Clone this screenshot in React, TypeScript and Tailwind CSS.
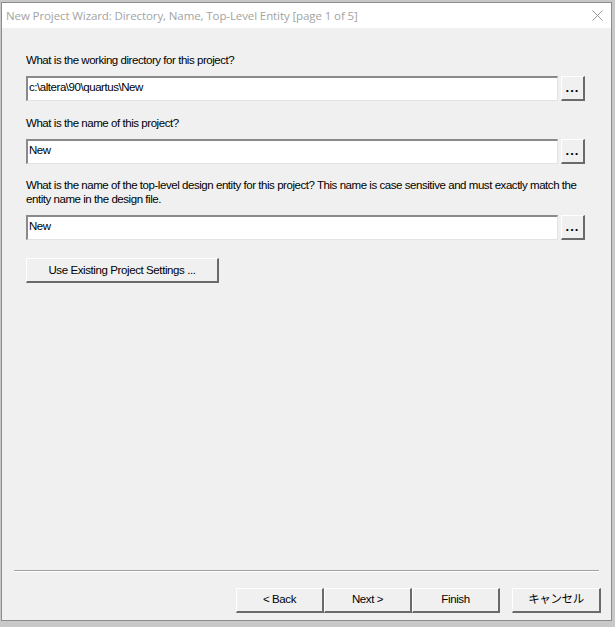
const font = { fontFamily: '"Liberation Sans", Arial, "Noto Sans CJK JP", sans-serif' };

function Field({ value }: { value: string }) {
  return (
    <div className="flex gap-[3px] h-[25px]">
      <div className="flex-1 bg-white border-t-2 border-l-2 border-t-[#8a8a8a] border-l-[#8a8a8a] border-b border-r border-b-[#e3e3e3] border-r-[#e3e3e3] pl-[1px] pt-[2px] text-[11.5px] leading-[14px] text-black tracking-[-0.45px]">
        {value}
      </div>
      <button className="w-[24px] h-[25px] bg-[#f0f0f0] border-t border-l border-t-white border-l-white border-b-2 border-r-2 border-b-[#6a6a6a] border-r-[#6a6a6a] flex items-end justify-center pb-[5px] text-[13px] font-bold leading-none text-black tracking-[1px]">
        ...
      </button>
    </div>
  );
}

function Btn({ label, className = "" }: { label: string; className?: string }) {
  return (
    <button
      className={`h-[25px] bg-[#f0f0f0] border-t border-l border-t-white border-l-white border-b-2 border-r-2 border-b-[#6a6a6a] border-r-[#6a6a6a] text-[11.5px] text-black tracking-[-0.4px] ${className}`}
    >
      {label}
    </button>
  );
}

export default function App() {
  return (
    <div className="w-[615px] h-[627px] bg-[#c8c8c8] pt-[2px] pl-[1px] pr-[3px] pb-[6px]" style={font}>
      <div className="w-full h-full flex flex-col border border-[#8c8c8c] bg-[#f0f0f0]">
        {/* title bar */}
        <div className="h-[25px] bg-white flex items-center justify-between pl-[4px] pr-[8px] shrink-0">
          <span className="text-[11.5px] text-[#a3a3a3] tracking-[-0.1px]" style={{ fontFamily: '"Open Sans", "Liberation Sans", sans-serif' }}>
            New Project Wizard: Directory, Name, Top-Level Entity [page 1 of 5]
          </span>
          <svg width="11" height="11" viewBox="0 0 11 11">
            <path d="M0.5 0.5 L10.5 10.5 M10.5 0.5 L0.5 10.5" stroke="#9a9a9a" strokeWidth="1" />
          </svg>
        </div>

        {/* body */}
        <div className="flex-1 flex flex-col pl-[24px] pr-[26px] pt-[25px] text-[11.5px] leading-[14px] text-black tracking-[-0.45px]">
          <p>What is the working directory for this project?</p>
          <div className="mt-[9px]">
            <Field value="c:\altera\90\quartus\New" />
          </div>

          <p className="mt-[15px]">What is the name of this project?</p>
          <div className="mt-[9px]">
            <Field value="New" />
          </div>

          <p className="mt-[14px]">
            What is the name of the top-level design entity for this project? This name is case sensitive and must exactly match the entity name in the design file.
          </p>
          <div className="mt-[9px]">
            <Field value="New" />
          </div>

          <div className="mt-[18px]">
            <Btn label="Use Existing Project Settings ..." className="w-[193px]" />
          </div>
        </div>

        {/* footer */}
        <div className="shrink-0 px-[12px]">
          <div className="h-[2px] border-t border-t-[#a0a0a0] border-b border-b-white" />
        </div>
        <div className="shrink-0 flex justify-end pr-[10px] pt-[16px] pb-[7px]">
          <Btn label="< Back" className="w-[88px]" />
          <Btn label="Next >" className="w-[88px]" />
          <Btn label="Finish" className="w-[88px]" />
          <Btn label="キャンセル" className="w-[89px] ml-[12px]" />
        </div>
      </div>
    </div>
  );
}
